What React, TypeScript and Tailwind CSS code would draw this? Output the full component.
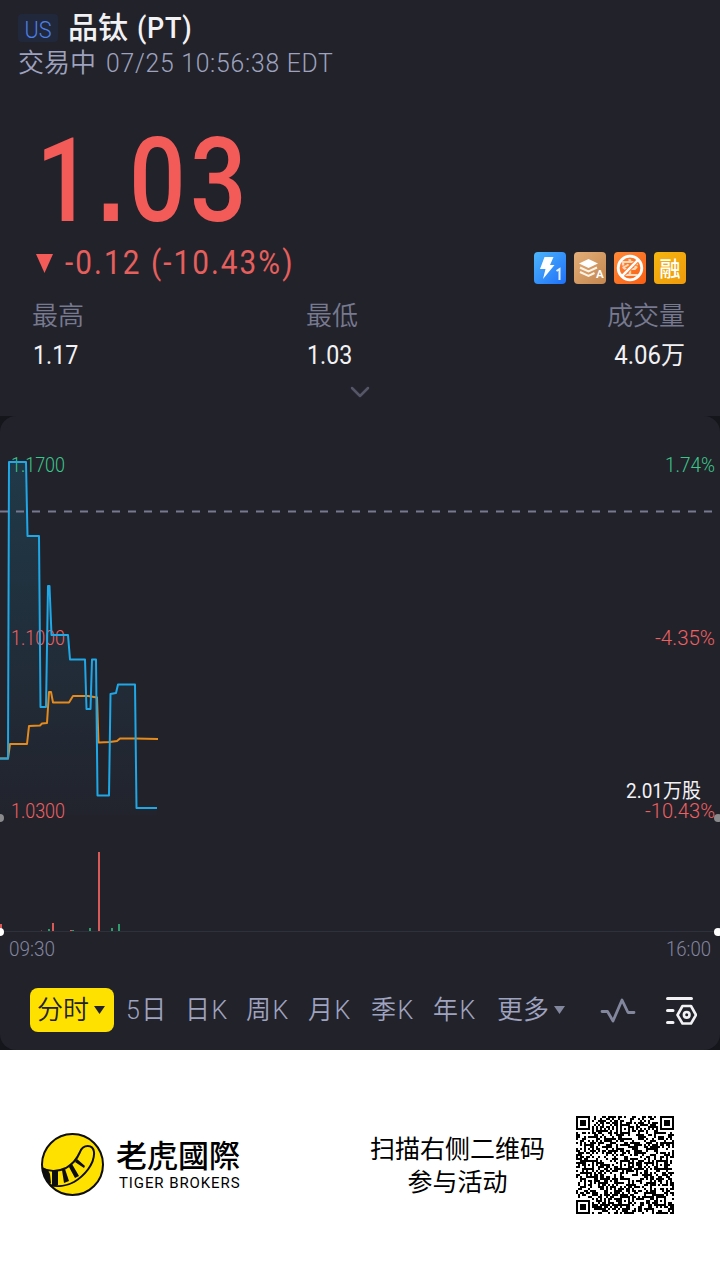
import React from 'react';

const latin = "font-['Roboto','Noto_Sans_CJK_SC',sans-serif]";

const tabs = [
  { label: '5日', width: 'w-[59px]' },
  { label: '日K', width: 'w-[61px]' },
  { label: '周K', width: 'w-[62px]' },
  { label: '月K', width: 'w-[63px]' },
  { label: '季K', width: 'w-[62px]' },
  { label: '年K', width: 'w-[64px]' },
];

const pricePoints =
  '0,758.5 8,758.5 9,462 26,462 27.5,536 39,536 40.5,707 46,707 48,586 49.5,586 51.5,635 68,635 70,659.5 85,659.5 86.5,709 90.5,709 92,659.5 96,659.5 97.5,795.5 109,795.5 110.5,694 116,693 118,684.5 135,684.5 136.5,808 157,808';

const averagePoints =
  '0,758.5 8,758.5 10,744 27,744 29,726 40,725.5 42,723.5 47,723 49,692 51,692 53,702.5 69,702.5 73,696 88,696 97,697.5 98.5,742.5 110,742 117,741 120,738.5 135,738.5 158,739';

const volumeBars = [
  { x: 0, w: 2, h: 7, color: '#d95a57' },
  { x: 41, w: 1, h: 1, color: '#7a4145' },
  { x: 48, w: 2, h: 2, color: '#2f9b6d' },
  { x: 52, w: 2, h: 8, color: '#d95a57' },
  { x: 70, w: 2, h: 1, color: '#d95a57' },
  { x: 72, w: 2, h: 1, color: '#2f9b6d' },
  { x: 89, w: 2, h: 3, color: '#2f9b6d' },
  { x: 98, w: 2, h: 79, color: '#d95a57' },
  { x: 111, w: 2, h: 3, color: '#2f9b6d' },
  { x: 118, w: 2, h: 7, color: '#2f9b6d' },
];

const axisLabels = [
  { text: '1.1700', x: 11, y: 472, w: 54, color: '#3bc78a' },
  { text: '1.1000', x: 11, y: 645, w: 54, color: '#ee6061' },
  { text: '1.0300', x: 11, y: 818, w: 54, color: '#ee6061' },
  { text: '1.74%', x: 665, y: 472, w: 50, color: '#3bc78a' },
  { text: '-4.35%', x: 655, y: 645, w: 60, color: '#ee6061' },
  { text: '-10.43%', x: 645, y: 818, w: 70, color: '#ee6061' },
  { text: '09:30', x: 9, y: 956, w: 46, color: '#82869f' },
  { text: '16:00', x: 666, y: 956, w: 45, color: '#82869f' },
];

const IntradayChart: React.FC = () => (
  <svg className="block h-[552px] w-[720px]" viewBox="0 416 720 552">
    <defs>
      <linearGradient id="area" x1="0" y1="462" x2="0" y2="815" gradientUnits="userSpaceOnUse">
        <stop offset="0" stopColor="#14a8d8" stopOpacity="0.17" />
        <stop offset="1" stopColor="#14a8d8" stopOpacity="0.01" />
      </linearGradient>
    </defs>
    <polygon points={`0,815 ${pricePoints} 157,815`} fill="url(#area)" />
    {axisLabels.map((l) => (
      <text
        key={l.text}
        x={l.x}
        y={l.y}
        textLength={l.w}
        lengthAdjust="spacingAndGlyphs"
        fill={l.color}
        fontFamily="Roboto, sans-serif"
        fontSize="20"
        fontWeight="300"
      >
        {l.text}
      </text>
    ))}
    <text x="626" y="798" textLength="75" lengthAdjust="spacingAndGlyphs" fill="#f2f2f4" fontFamily="Roboto, 'Noto Sans CJK SC', sans-serif" fontSize="20">
      2.01万股
    </text>
    <path d="M0 511.5H720" stroke="#777990" strokeWidth="2" strokeDasharray="8 8" />
    <polyline points={averagePoints} fill="none" stroke="#e58a1c" strokeWidth="2" strokeLinejoin="round" />
    <polyline points={pricePoints} fill="none" stroke="#1fa7e6" strokeWidth="2" strokeLinejoin="round" />
    <path d="M0 931.5H720" stroke="#2e303c" />
    {volumeBars.map((b) => (
      <rect key={b.x} x={b.x} y={931 - b.h} width={b.w} height={b.h} fill={b.color} />
    ))}
    <circle cx="0" cy="818" r="4" fill="#8a8a8c" />
    <circle cx="718" cy="818" r="4" fill="#8a8a8c" />
    <circle cx="0" cy="932" r="4" fill="#fff" />
    <circle cx="718" cy="932" r="4" fill="#fff" />
  </svg>
);

const Badges: React.FC = () => (
  <div className="flex gap-2">
    <svg className="size-8" viewBox="0 0 32 32">
      <defs>
        <linearGradient id="blue" x1="0" y1="0" x2="1" y2="1">
          <stop offset="0" stopColor="#4db5fb" />
          <stop offset="1" stopColor="#1f70f8" />
        </linearGradient>
      </defs>
      <rect width="32" height="32" rx="4" fill="url(#blue)" />
      <path d="M10.500 5h9l-3.500 8h4.500L9 27l2.500-10H6z" fill="#fff" />
      <path d="M22.500 19l3-2v11" fill="none" stroke="#e7f1ff" strokeWidth="2" />
    </svg>
    <svg className="size-8" viewBox="0 0 32 32">
      <defs>
        <linearGradient id="tan" x1="0" y1="0" x2="1" y2="1">
          <stop offset="0" stopColor="#e3ae78" />
          <stop offset="1" stopColor="#c48750" />
        </linearGradient>
      </defs>
      <rect width="32" height="32" rx="4" fill="url(#tan)" />
      <path d="M14.500 7L24 11.500l-9.500 4.500L5 11.500z" fill="#fff" />
      <path d="M6 15.500l8.500 4 8.500-4M6 20l8.500 4 6-3" fill="none" stroke="#fff3e6" strokeWidth="2" />
      <text x="22" y="26" fill="#fff" fontFamily="Roboto, sans-serif" fontSize="11.500" fontWeight="700">A</text>
    </svg>
    <svg className="size-8" viewBox="0 0 32 32">
      <defs>
        <linearGradient id="orange" x1="0" y1="0" x2="1" y2="1">
          <stop offset="0" stopColor="#ff8a38" />
          <stop offset="1" stopColor="#f95f14" />
        </linearGradient>
      </defs>
      <rect width="32" height="32" rx="4" fill="url(#orange)" />
      <text x="7" y="22.500" fill="#ffd9bd" fontFamily="'Noto Sans CJK SC', sans-serif" fontSize="18" fontWeight="700">空</text>
      <path d="M9 23L23 9" stroke="#fb732a" strokeWidth="4.500" />
      <circle cx="16" cy="16" r="11.800" fill="none" stroke="#fff" strokeWidth="2.800" />
      <path d="M7.700 24.300L24.300 7.700" stroke="#fff" strokeWidth="2.500" />
    </svg>
    <svg className="size-8" viewBox="0 0 32 32">
      <defs>
        <linearGradient id="gold" x1="0" y1="0" x2="1" y2="1">
          <stop offset="0" stopColor="#f5b510" />
          <stop offset="1" stopColor="#ef9a0b" />
        </linearGradient>
      </defs>
      <rect width="32" height="32" rx="4" fill="url(#gold)" />
      <text x="5.500" y="24" fill="#fff" fontFamily="'Noto Sans CJK SC', sans-serif" fontSize="21" fontWeight="500">融</text>
    </svg>
  </div>
);

const QR_SIZE = 49;

const inFinder = (x: number, y: number) =>
  (x < 8 && y < 8) || (x > QR_SIZE - 9 && y < 8) || (x < 8 && y > QR_SIZE - 9);

// Version 8 grid: finders, timing rows, alignment squares, then data modules.
const isDark = (x: number, y: number) => {
  if (inFinder(x, y)) {
    const fx = x < 8 ? x : QR_SIZE - 1 - x;
    const fy = y < 8 ? y : QR_SIZE - 1 - y;
    if (fx > 6 || fy > 6) return false;
    return Math.max(Math.abs(fx - 3), Math.abs(fy - 3)) !== 2;
  }
  for (const [cx, cy] of [[24, 6], [6, 24], [24, 24], [42, 24], [24, 42], [42, 42]]) {
    const d = Math.max(Math.abs(x - cx), Math.abs(y - cy));
    if (d <= 2) return d !== 1;
  }
  if (x === 6 || y === 6) return (x + y) % 2 === 0;
  let n = (x * 374761393 + y * 668265263) | 0;
  n = Math.imul(n ^ (n >>> 13), 1274126177);
  return ((n ^ (n >>> 16)) & 255) < 132;
};

const QrCode: React.FC = () => {
  let d = '';
  for (let y = 0; y < QR_SIZE; y++) {
    for (let x = 0; x < QR_SIZE; x++) {
      if (isDark(x, y)) d += `M${x} ${y}h1v1h-1z`;
    }
  }
  return (
    <svg className="size-[98px]" viewBox="0 0 49 49" shapeRendering="crispEdges">
      <path d={d} fill="#000" />
    </svg>
  );
};

const TigerLogo: React.FC = () => (
  <svg className="size-16" viewBox="0 0 64 64">
    <defs>
      <clipPath id="disc">
        <circle cx="32.500" cy="31.500" r="31" />
      </clipPath>
    </defs>
    <circle cx="32.500" cy="31.500" r="31" fill="#ffe100" />
    <g clipPath="url(#disc)">
      <path
        d="M0 34C8 39 18 39 26 35C33 31 37 26 40 19C43 11 53 11 54 19C55 31 44 43 34 49C27 53 17 54 9 52"
        fill="none"
        stroke="#0d0d0d"
        strokeWidth="2"
      />
      <path d="M0 34l8 3 2 4 1 9-2 2zM12 38h6l0 14h-6zM22 37l3-1 4 12-5 2zM29 34l3-3 7 12-4 2zM35 29l2-3 8 7-1 2z" fill="#0d0d0d" />
    </g>
    <circle cx="32.500" cy="31.500" r="30.500" fill="none" stroke="#0d0d0d" strokeWidth="2" />
  </svg>
);

const App: React.FC = () => {
  return (
    <div className={`flex h-[1280px] w-[720px] flex-col overflow-hidden bg-white ${latin}`}>
      <div className="h-[1050px] bg-[#15151c]">
        {/* Quote header */}
        <header className="h-[416px] bg-[#22222b]">
          <div className="flex h-[45px] items-center pl-[18px] pt-[11px]">
            <span className="flex h-7 w-10 items-center justify-center rounded bg-[#21283b] pt-1 text-[24px] font-light text-[#4b7fe6]">
              <span className="inline-block scale-x-90">US</span>
            </span>
            <h1 className="ml-[10px] flex text-[30px] font-medium leading-9 text-[#f2f2f4]">
              品钛
              <span className="ml-[9px] inline-block origin-left scale-x-[0.93] text-[29px] tracking-[0.8px]">(PT)</span>
            </h1>
          </div>
          <div className="flex h-9 items-center pl-[18px] text-[26px] font-[350] text-[#9ea2be]">
            交易中
            <span className="ml-2.5 inline-block origin-left scale-x-[0.95] whitespace-nowrap font-light tracking-[0.8px]">07/25 10:56:38 EDT</span>
          </div>

          <div className="flex h-[158px] items-end pl-[36px]">
            <span className="inline-block h-[116px] origin-left scale-x-[0.86] whitespace-nowrap text-[116px] font-medium leading-[116px] tracking-[5px] text-[#f35b58]">
              1<span className="font-['Liberation_Sans',sans-serif] font-bold leading-none">.</span>03
            </span>
          </div>

          <div className="flex h-[57px] items-start justify-between pl-[36px] pr-[34px] pt-px">
            <div className="flex h-[46px] items-center text-[33px] leading-9 text-[#e65f5c]">
              <svg className="h-[19px] w-[17px]" viewBox="0 0 17 19">
                <path d="M0 0h17L8.500 19z" fill="#f35b58" />
              </svg>
              <span className="ml-3 inline-block origin-left scale-x-90 whitespace-nowrap tracking-[2.300px]">-0.12 (-10.43%)</span>
            </div>
            <div className="pt-3">
              <Badges />
            </div>
          </div>

          <div className="grid h-[78px] grid-cols-[274px_1fr_auto] pl-[32px] pr-[35px] pt-[1px] leading-[39px] text-[#f2f2f4]">
            <span className="text-[26px] font-[350] text-[#77798f]">最高</span>
            <span className="text-[26px] font-[350] text-[#77798f]">最低</span>
            <span className="text-right text-[26px] font-[350] text-[#77798f]">成交量</span>
            <span className="ml-px origin-left scale-x-[0.93] text-[25px]">1.17</span>
            <span className="ml-px origin-left scale-x-[0.93] text-[25px]">1.03</span>
            <span className="origin-right scale-x-[0.96] text-right text-[25px]">4.06万</span>
          </div>

          <div className="flex justify-center pt-3">
            <svg className="h-3 w-5" viewBox="0 0 20 12">
              <path d="M2 2l8 8 8-8" fill="none" stroke="#555766" strokeWidth="2.500" strokeLinecap="round" strokeLinejoin="round" />
            </svg>
          </div>
        </header>

        {/* Intraday chart */}
        <section className="h-[634px] overflow-hidden rounded-2xl bg-[#22222b]">
          <IntradayChart />
          <nav className="flex h-[84px] items-center pl-[30px] text-[26px] font-[350] text-[#9fa3bf]">
            <button className="mr-3 flex h-11 w-[84px] items-center gap-[5px] rounded-lg bg-[#ffe100] pl-[7px] text-[#22222b]">
              分时
              <svg className="h-2 w-[11px]" viewBox="0 0 11 8">
                <path d="M0 0h11L5.500 8z" fill="#22222b" />
              </svg>
            </button>
            {tabs.map((t) => (
              <span key={t.label} className={`${t.width} whitespace-nowrap`}>
                <span className="inline-block origin-left scale-x-[0.96] tracking-[1.5px]">{t.label}</span>
              </span>
            ))}
            <span className="flex items-center gap-[5px]">
              更多
              <svg className="h-2 w-[11px]" viewBox="0 0 11 8">
                <path d="M0 0h11L5.500 8z" fill="#83879d" />
              </svg>
            </span>
            <svg className="ml-[35px] h-7 w-9" viewBox="0 0 36 28">
              <path d="M2 15.500h5.500l5.500 9.500 9-21 6 12.500h6" fill="none" stroke="#83879d" strokeWidth="2.800" strokeLinecap="round" strokeLinejoin="round" />
            </svg>
            <svg className="ml-[29px] h-8 w-8" viewBox="0 0 32 32">
              <g fill="none" stroke="#f2f2f4" strokeWidth="3" strokeLinecap="round" strokeLinejoin="round">
                <path d="M2.500 4.500h24M2.500 16.500h5.500M2.500 28.500h5.500" />
                <path d="M17.500 12h8.500l5 9-5 8.500h-8.500l-5-8.500z" strokeWidth="2.600" />
                <circle cx="21.700" cy="20.800" r="2.800" strokeWidth="2.600" />
              </g>
            </svg>
          </nav>
        </section>
      </div>

      {/* Share footer */}
      <footer className="flex h-[230px] items-center bg-white pl-10 pr-[46px] text-black">
        <TigerLogo />
        <div className="ml-3 flex flex-col">
          <span className="whitespace-nowrap font-['Noto_Sans_CJK_TC',sans-serif] text-[31px] font-medium leading-[34px]">老虎國際</span>
          <span className="ml-[3px] whitespace-nowrap pt-0.5 text-[15px] leading-5 tracking-[0.9px]">TIGER BROKERS</span>
        </div>
        <p className="ml-auto mr-[31px] pt-0.5 text-center text-[25px] font-normal leading-[33px]">
          扫描右侧二维码
          <br />
          参与活动
        </p>
        <QrCode />
      </footer>
    </div>
  );
};

export default App;
